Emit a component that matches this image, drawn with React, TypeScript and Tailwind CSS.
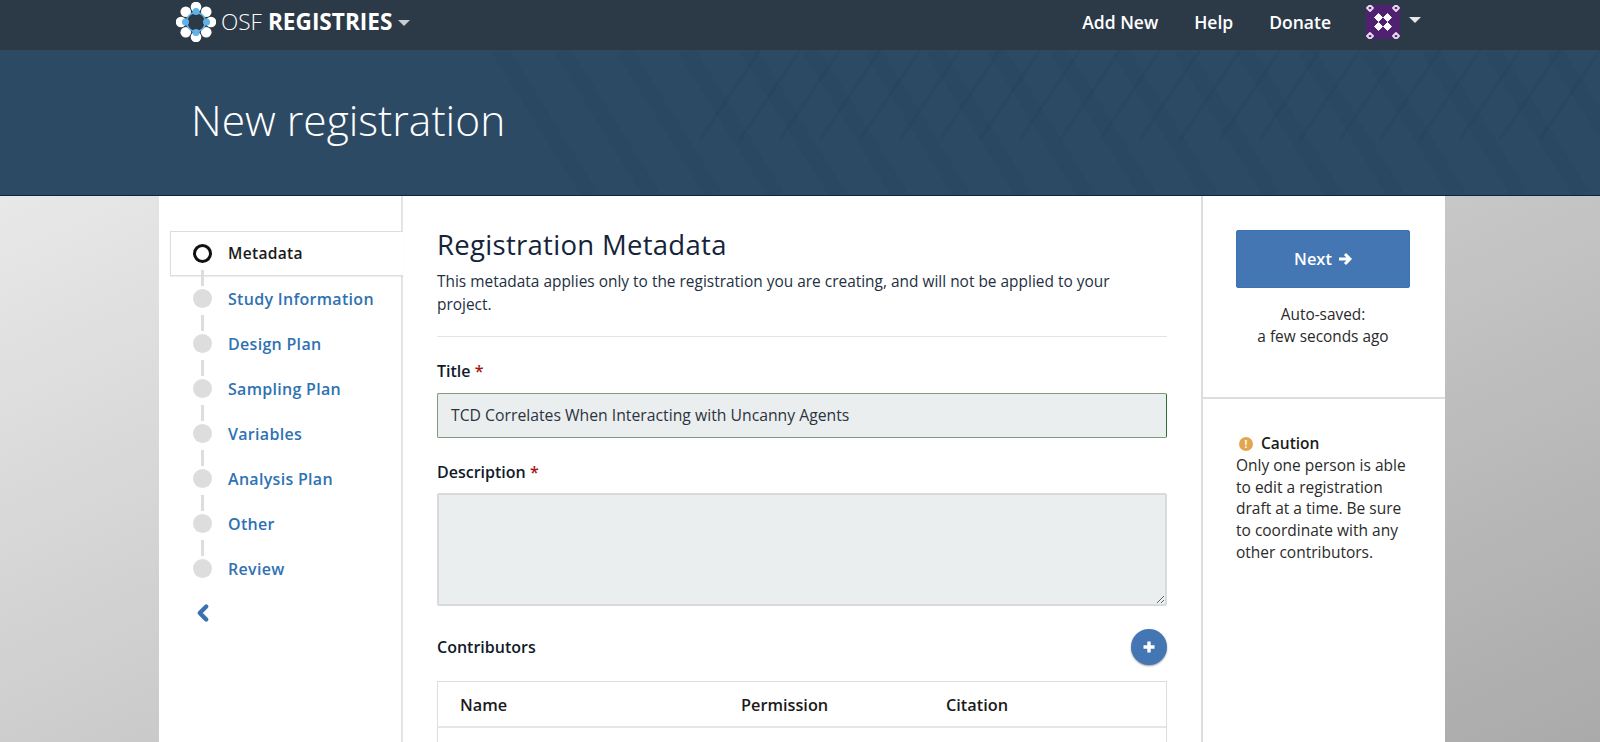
import { ChevronLeft } from "lucide-react";

const steps = [
  "Study Information",
  "Design Plan",
  "Sampling Plan",
  "Variables",
  "Analysis Plan",
  "Other",
  "Review",
];

const Logo = () => {
  const white = [0, 45, 90, 135, 180, 225, 270, 315];
  const blue = [0, 90, 180, 270];
  return (
    <svg width="40" height="40" viewBox="-20 -20 40 40" className="shrink-0">
      {white.map((a) => {
        const r = a % 90 === 0 ? 15 : 14.5;
        return (
          <circle
            key={a}
            cx={r * Math.sin((a * Math.PI) / 180)}
            cy={-r * Math.cos((a * Math.PI) / 180)}
            r="5.3"
            fill="#fff"
          />
        );
      })}
      <circle r="9.5" fill="none" stroke="#5fb3e8" strokeWidth="1.6" />
      {blue.map((a) => (
        <circle
          key={a}
          cx={10.5 * Math.sin((a * Math.PI) / 180)}
          cy={-10.5 * Math.cos((a * Math.PI) / 180)}
          r="3.5"
          fill="#5fb3e8"
        />
      ))}
    </svg>
  );
};

const Avatar = () => (
  <svg width="34" height="34" viewBox="0 0 34 34" className="shrink-0">
    <rect width="34" height="34" fill="#4f2170" />
    {[
      [4, 3],
      [30, 3],
      [4, 31],
      [30, 31],
    ].map(([x, y]) => (
      <path
        key={`${x}-${y}`}
        d={`M${x} ${y - 3}L${x + 3} ${y}L${x} ${y + 3}L${x - 3} ${y}Z`}
        fill="#4f2170"
        stroke="#e8dcec"
        strokeWidth="1.8"
        strokeLinejoin="round"
      />
    ))}
    {[
      [12.5, 12.5],
      [21.5, 12.5],
      [12.5, 21.5],
      [21.5, 21.5],
    ].map(([x, y]) => (
      <path
        key={`${x}-${y}`}
        d={`M${x} ${y - 4}L${x + 4} ${y}L${x} ${y + 4}L${x - 4} ${y}Z`}
        fill="#fff"
        stroke="#fff"
        strokeWidth="1"
        strokeLinejoin="round"
      />
    ))}
  </svg>
);

const Caret = ({ className }: { className: string }) => (
  <span
    className={`inline-block w-0 h-0 border-x-[6px] border-x-transparent border-t-[6px] ${className}`}
  />
);

const HeroTexture = () => (
  <svg
    className="absolute inset-0 w-full h-full"
    viewBox="0 0 1600 146"
    preserveAspectRatio="none"
  >
    {[...Array(18)].map((_, i) => (
      <path
        key={i}
        d={`M${500 + i * 62} 0L${590 + i * 62} 146`}
        stroke="#1f3b55"
        strokeOpacity="0.13"
        strokeWidth="16"
      />
    ))}
    {[...Array(22)].map((_, i) => (
      <path
        key={i}
        d={`M${700 + i * 40} 90L${760 + i * 40} 0`}
        stroke="#1f3b55"
        strokeOpacity="0.14"
        strokeWidth="3"
      />
    ))}
  </svg>
);

const App = () => {
  return (
    <div className="h-[742px] overflow-hidden flex flex-col font-['Open_Sans',sans-serif] bg-linear-to-br from-[#f2f2f2] to-[#aaaaaa]">
      <header className="h-[50px] shrink-0 bg-[#2c3a48] flex items-center pb-[6px] text-white">
        <div className="ml-[176px] flex items-center">
          <Logo />
          <span className="ml-[5px] text-[22.6px] font-light">OSF</span>
          <span className="ml-[6px] text-[22.6px] font-bold">REGISTRIES</span>
          <Caret className="ml-[6px] mt-[2px] border-t-[#c8ccd0]" />
        </div>
        <nav className="ml-auto mr-[179px] flex items-center text-[17.5px] font-semibold">
          <a className="mr-[36px]">Add New</a>
          <a className="mr-[36px]">Help</a>
          <a className="mr-[35px]">Donate</a>
          <Avatar />
          <Caret className="ml-[9px] mb-[5px] border-t-[#e8e8e8]" />
        </nav>
      </header>

      <section className="relative h-[146px] shrink-0 bg-[#2d4a64] border-b border-[#0f2344] overflow-hidden">
        <HeroTexture />
        <h1 className="relative ml-[191px] mt-[41px] text-[42.5px] leading-[58px] font-light text-white">
          New registration
        </h1>
      </section>

      <div className="flex-1 min-h-0 ml-[159px] mr-[155px] bg-white flex">
        <aside className="w-[244px] shrink-0 border-r-2 border-[#e4e4e4] pt-[35px] pl-[11px]">
          <div className="relative h-[45px] -mr-[2px] border border-r-0 border-[#dddddd] bg-white flex items-center shadow-[0_1px_1px_rgba(0,0,0,0.06)]">
            <span className="ml-[22px] w-[19px] h-[19px] rounded-full border-[3px] border-[#111111]" />
            <span className="ml-[16px] text-[15.6px] font-semibold tracking-[0.3px] text-[#1b1b1b]">
              Metadata
            </span>
          </div>
          {steps.map((step) => (
            <div key={step} className="relative h-[45px] flex items-center">
              <span className="absolute left-[31px] -top-[6px] w-[3px] h-[16px] bg-[#dddddd]" />
              <span className="ml-[23px] w-[19px] h-[19px] rounded-full bg-[#dddddd]" />
              <span className="ml-[16px] text-[16px] font-semibold tracking-[0.3px] text-[#2f72b3]">
                {step}
              </span>
            </div>
          ))}
          <ChevronLeft
            className="ml-[20px] mt-[9px] text-[#3a72b0]"
            size={26}
            strokeWidth={4}
          />
        </aside>

        <main className="w-[798px] shrink-0 px-[34px] pt-[31px] text-[#111a2b]">
          <h2 className="text-[27.5px] leading-[36px] font-medium tracking-[0.3px] text-[#15243a]">
            Registration Metadata
          </h2>
          <p className="mt-[7px] text-[15.45px] leading-[22.5px] text-[#24303f]">
            This metadata applies only to the registration you are creating, and
            will not be applied to your project.
          </p>
          <hr className="mt-[21px] border-[#e4e4e4]" />
          <label className="block mt-[23px] text-[16px] leading-[22px] font-semibold">
            Title <span className="text-[#a31515]">*</span>
          </label>
          <div className="mt-[11px] h-[45px] px-[13px] flex items-center bg-[#ebeeef] border border-[#7f9b7c] border-r-[#2f6b2f] rounded-[2px] text-[15.75px] text-[#2b3440]">
            TCD Correlates When Interacting with Uncanny Agents
          </div>
          <label className="block mt-[23px] text-[16px] leading-[22px] font-semibold">
            Description <span className="text-[#a31515]">*</span>
          </label>
          <textarea
            readOnly
            className="block mt-[10px] w-full h-[113px] bg-[#ebeeef] border-2 border-[#d8dadb] rounded-[2px]"
          />
          <div className="mt-[23px] flex items-center justify-between">
            <span className="text-[16px] font-semibold">Contributors</span>
            <span className="w-[36px] h-[36px] rounded-full bg-[#4376b3] text-white flex items-center justify-center shadow-[0_1px_2px_rgba(0,0,0,0.4)]">
              <svg width="14" height="14" viewBox="0 0 14 14">
                <path d="M7 1.5V12.5M1.5 7H12.5" stroke="#fff" strokeWidth="3.4" />
              </svg>
            </span>
          </div>
          <div className="mt-[16px] h-[80px] border border-b-0 border-[#dedede]">
            <div className="h-[46px] pt-[2px] border-b-2 border-[#e6e6e6] flex items-center text-[16.3px] font-semibold text-[#1b1b1b]">
              <span className="ml-[22px] w-[281px]">Name</span>
              <span className="w-[205px]">Permission</span>
              <span>Citation</span>
            </div>
          </div>
        </main>

        <aside className="flex-1 border-l-2 border-[#dddddd]">
          <div className="h-[203px] border-b-2 border-[#dddddd] pl-[33px] pr-[35px] pt-[34px] text-center">
            <button className="w-full h-[58px] rounded-[2px] bg-[#4376b3] border border-[#3a74b8] text-white text-[16.4px] font-semibold flex items-center justify-center">
              Next
              <svg width="14" height="14" viewBox="0 0 14 14" className="ml-[6px]">
                <path
                  d="M1 7H11M7 2L12 7L7 12"
                  fill="none"
                  stroke="#fff"
                  strokeWidth="3"
                />
              </svg>
            </button>
            <p className="mt-[16px] text-[15.4px] leading-[22px] text-[#2a2a2a]">
              Auto-saved:
              <br />a few seconds ago
            </p>
          </div>
          <div className="pl-[33px] pr-[30px] pt-[34px] text-[15.5px] leading-[21.8px] text-[#2a2a2a]">
            <div className="flex items-center font-semibold text-[#1b1b1b]">
              <span className="ml-[3px] mr-[8px] w-[14px] h-[14px] rounded-full bg-[#e3a650] text-white text-[10px] leading-[14px] font-bold text-center">
                !
              </span>
              Caution
            </div>
            Only one person is able to edit a registration draft at a time. Be
            sure to coordinate with any other contributors.
          </div>
        </aside>
      </div>
    </div>
  );
};

export default App;
